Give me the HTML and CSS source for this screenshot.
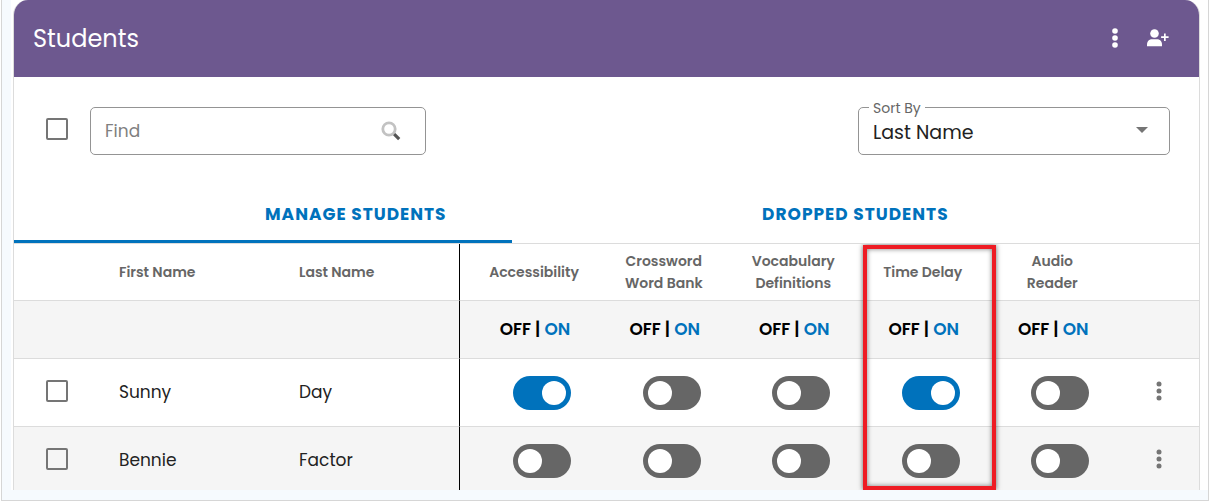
FILE: index.html
```html
<!DOCTYPE html>
<html lang="en">
<head>
    <meta charset="UTF-8">
    <meta name="viewport" content="width=device-width, initial-scale=1.0">
    <title>Students</title>
    <link rel="stylesheet" href="styles.css">
</head>
<body>
    <div class="frame">
        <div class="page">
            <main class="card">
                <header class="card-header">
                    <h1>Students</h1>
                    <div class="header-actions">
                        <button type="button" class="icon-button" aria-label="More options">
                            <svg width="6" height="20" viewBox="0 0 6 20" fill="currentColor"><circle cx="3" cy="3" r="2.8"/><circle cx="3" cy="10" r="2.8"/><circle cx="3" cy="17" r="2.8"/></svg>
                        </button>
                        <button type="button" class="icon-button" aria-label="Add student">
                            <svg width="22" height="18" viewBox="0 0 22 18" fill="currentColor"><circle cx="7.500" cy="4.500" r="4.300"/><path d="M0 17.300v-1.800c0-3.400 2.500-5.200 5-5.200h5c2.500 0 5 1.800 5 5.200v1.800z"/><path d="M17 4.500h1.700V7.300h2.900v1.700h-2.900v2.900H17V9h-2.900V7.300H17z"/></svg>
                        </button>
                    </div>
                </header>

                <div class="toolbar">
                    <input type="checkbox" class="check" aria-label="Select all students">
                    <div class="search">
                        <input type="text" id="find" placeholder="Find" aria-label="Find">
                        <svg class="search-icon" width="20" height="20" viewBox="0 0 20 20" fill="none"><circle cx="8" cy="8" r="6.200" stroke="#c2c2c2" stroke-width="2.800"/><path d="M13.200 13.200l5 5" stroke="#555" stroke-width="3.200"/></svg>
                    </div>
                    <div class="sort">
                        <label for="sort">Sort By</label>
                        <select id="sort">
                            <option>Last Name</option>
                            <option>First Name</option>
                        </select>
                        <svg class="sort-arrow" width="12" height="6" viewBox="0 0 12 6" fill="#757575"><path d="M0 0h12L6 6z"/></svg>
                    </div>
                </div>

                <div class="tabs" role="tablist">
                    <button type="button" class="tab active" role="tab" aria-selected="true">MANAGE STUDENTS</button>
                    <button type="button" class="tab" role="tab" aria-selected="false">DROPPED STUDENTS</button>
                </div>

                <div class="roster">
                    <table>
                        <colgroup>
                            <col class="col-check">
                            <col class="col-first">
                            <col class="col-last">
                            <col class="col-access">
                            <col><col><col><col>
                            <col class="col-menu">
                        </colgroup>
                        <thead>
                            <tr>
                                <td></td>
                                <th class="name">First Name</th>
                                <th class="name divider">Last Name</th>
                                <th class="setting first-option">Accessibility</th>
                                <th class="setting">Crossword<br>Word Bank</th>
                                <th class="setting">Vocabulary<br>Definitions</th>
                                <th class="setting">Time Delay</th>
                                <th class="setting">Audio<br>Reader</th>
                                <td></td>
                            </tr>
                            <tr class="bulk">
                                <td></td>
                                <td></td>
                                <td class="divider"></td>
                                <td class="first-option"><button type="button">OFF</button> | <button type="button" class="on">ON</button></td>
                                <td><button type="button">OFF</button> | <button type="button" class="on">ON</button></td>
                                <td><button type="button">OFF</button> | <button type="button" class="on">ON</button></td>
                                <td><button type="button">OFF</button> | <button type="button" class="on">ON</button></td>
                                <td><button type="button">OFF</button> | <button type="button" class="on">ON</button></td>
                                <td></td>
                            </tr>
                        </thead>
                        <tbody>
                            <tr>
                                <td class="select"><input type="checkbox" class="check" aria-label="Select Sunny Day"></td>
                                <td class="name">Sunny</td>
                                <td class="name divider">Day</td>
                                <td class="option first-option"><input type="checkbox" role="switch" class="toggle" aria-label="Accessibility" checked></td>
                                <td class="option"><input type="checkbox" role="switch" class="toggle" aria-label="Crossword Word Bank"></td>
                                <td class="option"><input type="checkbox" role="switch" class="toggle" aria-label="Vocabulary Definitions"></td>
                                <td class="option"><input type="checkbox" role="switch" class="toggle" aria-label="Time Delay" checked></td>
                                <td class="option"><input type="checkbox" role="switch" class="toggle" aria-label="Audio Reader"></td>
                                <td class="menu">
                                    <button type="button" class="icon-button" aria-label="Options for Sunny Day">
                                        <svg width="6" height="20" viewBox="0 0 6 20" fill="currentColor"><circle cx="3" cy="3" r="2.500"/><circle cx="3" cy="10" r="2.500"/><circle cx="3" cy="17" r="2.500"/></svg>
                                    </button>
                                </td>
                            </tr>
                            <tr class="shaded">
                                <td class="select"><input type="checkbox" class="check" aria-label="Select Bennie Factor"></td>
                                <td class="name">Bennie</td>
                                <td class="name divider">Factor</td>
                                <td class="option first-option"><input type="checkbox" role="switch" class="toggle" aria-label="Accessibility"></td>
                                <td class="option"><input type="checkbox" role="switch" class="toggle" aria-label="Crossword Word Bank"></td>
                                <td class="option"><input type="checkbox" role="switch" class="toggle" aria-label="Vocabulary Definitions"></td>
                                <td class="option"><input type="checkbox" role="switch" class="toggle" aria-label="Time Delay"></td>
                                <td class="option"><input type="checkbox" role="switch" class="toggle" aria-label="Audio Reader"></td>
                                <td class="menu">
                                    <button type="button" class="icon-button" aria-label="Options for Bennie Factor">
                                        <svg width="6" height="20" viewBox="0 0 6 20" fill="currentColor"><circle cx="3" cy="3" r="2.500"/><circle cx="3" cy="10" r="2.500"/><circle cx="3" cy="17" r="2.500"/></svg>
                                    </button>
                                </td>
                            </tr>
                        </tbody>
                    </table>
                    <div class="highlight"></div>
                </div>
            </main>
        </div>
    </div>
</body>
</html>
```

FILE: styles.css
```css
* {
    box-sizing: border-box;
}
body {
    font-family: Poppins, Inter, "Liberation Sans", sans-serif;
    font-size: 17px;
    color: #222;
    background-color: #fff;
    margin: 0;
}
button, input, select {
    font-family: inherit;
}
button {
    background: none;
    border: none;
    padding: 0;
    color: inherit;
    cursor: pointer;
}
svg {
    display: block;
}
.frame {
    display: flex;
    height: calc(100vh - 1px);
    margin: 0 1px;
    padding: 0 0 10px 9px;
    background-color: #f6fafe;
    border: 1px solid #d6d6d6;
    border-top: none;
}
.page {
    flex: 1;
    padding: 0 8px 0 2px;
    background-color: #fff;
}
.card {
    display: flex;
    flex-direction: column;
    height: 100%;
    border: 1px solid #dcdcdc;
    border-width: 0 1px;
    border-radius: 15px 15px 0 0;
    overflow: hidden;
}
.card-header {
    display: flex;
    justify-content: space-between;
    align-items: center;
    flex: none;
    height: 77px;
    padding: 0 30px 0 19px;
    background-color: #6d588f;
    color: #fff;
}
h1 {
    font-size: 24px;
    font-weight: 400;
    margin: 0;
}
.header-actions {
    display: flex;
    align-items: center;
    gap: 29px;
    padding-bottom: 2px;
}
.toolbar {
    display: flex;
    align-items: center;
    padding: 30px 29px 30px 32px;
}
.check {
    appearance: none;
    display: block;
    width: 22px;
    height: 22px;
    margin: 0;
    border: 2px solid #757575;
    border-radius: 2px;
}
.check:checked {
    background-color: #0072bc;
}
.toolbar .check {
    margin: 0 22px 4px 0;
}
.search {
    position: relative;
    width: 336px;
}
.search input, .sort select {
    display: block;
    appearance: none;
    width: 100%;
    height: 48px;
    padding: 0 14px;
    border: 1px solid #949494;
    border-radius: 5px;
    background-color: #fff;
    font-size: 17px;
}
.search input::placeholder {
    color: #808080;
}
.search-icon {
    position: absolute;
    right: 25px;
    top: 14px;
}
.sort {
    position: relative;
    width: 312px;
    margin-left: auto;
}
.sort label {
    position: absolute;
    left: 11px;
    top: -8px;
    padding: 0 4px;
    background-color: #fff;
    color: #666;
    font-size: 14px;
    line-height: 18px;
}
.sort select {
    padding-top: 2px;
    color: #222;
    font-size: 19px;
}
.sort-arrow {
    position: absolute;
    right: 22px;
    top: 20px;
    pointer-events: none;
}
.tabs {
    display: flex;
    flex: none;
    height: 59px;
    border-bottom: 1px solid #dcdcdc;
}
.tab {
    flex: 1;
    padding-top: 2px;
    border-bottom: 3px solid transparent;
    color: #0072bc;
    font-size: 17px;
    font-weight: 700;
    letter-spacing: 1px;
}
.tab.active {
    flex: 0 0 42%;
    padding-left: 251px;
    text-align: left;
    border-bottom-color: #0072bc;
}
.roster {
    position: relative;
    flex: 1;
    min-height: 0;
    overflow: hidden;
}
table {
    width: 100%;
    table-layout: fixed;
    border-collapse: separate;
    border-spacing: 0;
}
.col-check { width: 105px; }
.col-first { width: 180px; }
.col-last { width: 161px; }
.col-access { width: 140px; }
.col-menu { width: 81px; }
th, td {
    padding: 0;
    border-bottom: 1px solid #dcdcdc;
    text-align: center;
}
th {
    height: 57px;
    color: #666;
    font-size: 14px;
    font-weight: 600;
    line-height: 22px;
}
.name {
    text-align: left;
}
tbody .name {
    padding-bottom: 1px;
}
.divider {
    border-right: 1px solid #000;
}
.setting {
    padding-right: 2px;
}
.first-option {
    padding-left: 10px;
}
.bulk td {
    height: 58px;
    padding-bottom: 1px;
    background-color: #f5f5f5;
    color: #000;
    font-weight: 600;
}
.bulk button {
    font-size: 17px;
    font-weight: 600;
}
.bulk .on {
    color: #0072bc;
}
tbody td {
    height: 68px;
}
.shaded td {
    background-color: #f5f5f5;
}
.select {
    padding: 0 0 3px 32px;
}
.option {
    padding-left: 14px;
}
.option.first-option {
    padding-left: 24px;
}
.toggle {
    appearance: none;
    display: block;
    width: 58px;
    height: 34px;
    margin: 0 auto;
    padding: 5px;
    border-radius: 17px;
    background-color: #666;
    cursor: pointer;
}
.toggle::before {
    content: "";
    display: block;
    width: 24px;
    height: 24px;
    border-radius: 50%;
    background-color: #fff;
}
.toggle:checked {
    background-color: #0072bc;
}
.toggle:checked::before {
    margin-left: auto;
}
.menu {
    padding-bottom: 3px;
    color: #757575;
}
.menu .icon-button {
    display: block;
    margin: 0 auto;
}
/* Callout round the Time Delay column */
.highlight {
    position: absolute;
    top: 1px;
    right: 203px;
    bottom: 0;
    width: 133px;
    border: 4px solid #ee1c24;
    box-shadow: 0 0 5px rgba(0, 0, 0, 0.6), inset 0 0 5px rgba(0, 0, 0, 0.5);
    pointer-events: none;
}
```
